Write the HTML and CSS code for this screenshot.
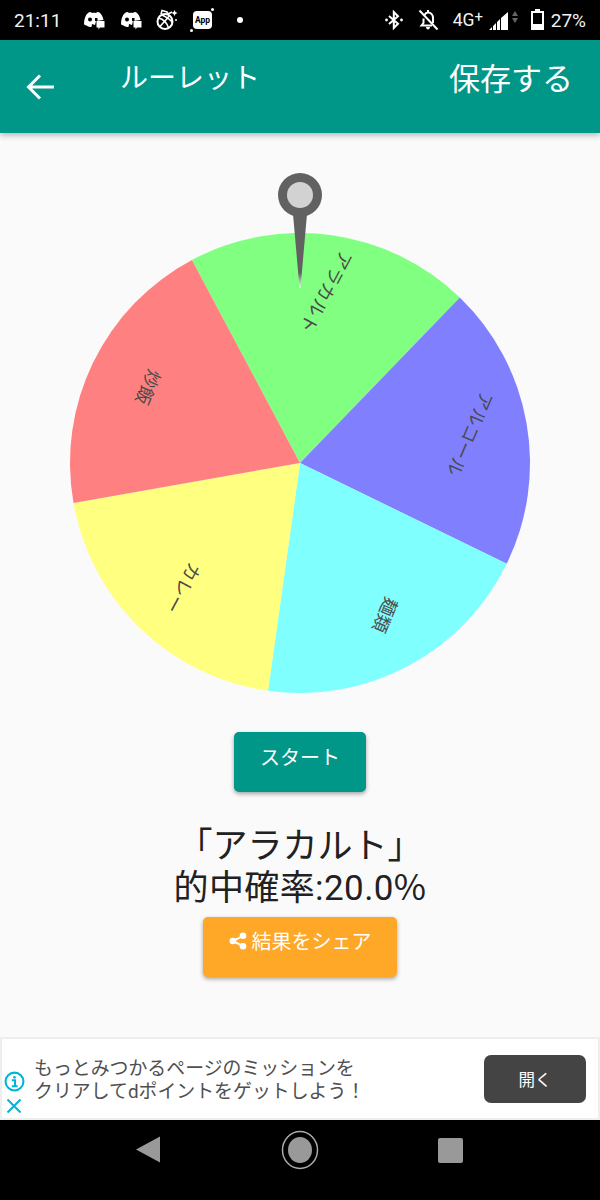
FILE: index.html
```html
<!DOCTYPE html>
<html lang="ja">
<head>
<meta charset="utf-8">
<title>ルーレット</title>
<link rel="stylesheet" href="styles.css">
</head>
<body>
<div class="screen">
  <div class="status">
    <div class="status-left">
      <span class="clock">21:11</span>
      <svg class="notif" width="24" height="20" viewBox="0 0 24 20"><path class="w" d="M1 14 C1 9 2.500 5 5 3 C7 1.500 8 2 9 3 C10 2.500 12 2.500 13 3 C14 2 15.500 1.500 17 3 C19 5 20 7 20.500 10 L13 11 L12 15 L9 14 L8.500 17 C7 17 5 16.500 3.500 15.500 C2 15 1 14.500 1 14Z"/><circle class="k" cx="7" cy="9.500" r="2"/><path class="k" d="M12 8 H14.500 V11 H12Z"/><path class="w" d="M13.500 11 H21.500 V17.500 H17 L15.500 19.500 V17.500 H13.500Z"/></svg>
      <svg class="notif" width="24" height="20" viewBox="0 0 24 20"><path class="w" d="M1 14 C1 9 2.500 5 5 3 C7 1.500 8 2 9 3 C10 2.500 12 2.500 13 3 C14 2 15.500 1.500 17 3 C19 5 20 7 20.500 10 L13 11 L12 15 L9 14 L8.500 17 C7 17 5 16.500 3.500 15.500 C2 15 1 14.500 1 14Z"/><circle class="k" cx="7" cy="9.500" r="2"/><path class="k" d="M12 8 H14.500 V11 H12Z"/><path class="w" d="M13.500 11 H21.500 V17.500 H17 L15.500 19.500 V17.500 H13.500Z"/></svg>
      <svg class="notif ball" width="24" height="22" viewBox="0 0 24 22"><circle class="ws2" cx="10" cy="12.500" r="7.500"/><path class="ws" d="M3.500 9 C8 10 12 14 13.500 19 M7 6 C11 8 16 10 17.500 14 M5 17.500 C8 14 12 10 14.500 6.500"/><path class="ws" d="M6 5 L7 1.500 L12 3 L13 5 M13 5 L17 3"/><path class="w" d="M19.500 1 L20.500 3 L22.500 4 L20.500 5 L19.500 7 L18.500 5 L16.500 4 L18.500 3Z"/><circle class="w" cx="21" cy="11" r="1"/></svg>
      <span class="app-icon"><span class="app-label">App</span><span class="spark spark-a"></span><span class="spark spark-b"></span></span>
      <span class="dot"></span>
    </div>
    <div class="status-right">
      <svg class="bt" width="20" height="20" viewBox="0 0 20 20"><path class="ws2" d="M5 6 L14 13.800 L9.800 18 V2 L14 6.200 L5 14"/><circle class="w" cx="2.500" cy="10" r="1.400"/><circle class="w" cx="17.500" cy="10" r="1.400"/></svg>
      <svg class="bell" width="22" height="22" viewBox="0 0 22 22"><path class="ws2" d="M7.500 6 C8.500 4 10 3.500 11 3.500 C14 3.500 16 6 16 9 V14 M6.500 9.500 V14 L4.500 16.500 H15"/><path class="w" d="M9 18 H13 C13 19.500 12 20.500 11 20.500 C10 20.500 9 19.500 9 18Z"/><path class="ws2" d="M2.500 1.500 L20.500 20.500"/><rect class="w" x="10" y="1" width="2" height="2.500"/></svg>
      <span class="net">4G<span class="plus">+</span></span>
      <svg class="signal" width="30" height="22" viewBox="0 0 30 22"><path class="w" d="M0 21 H3 V18Z M4 21 H7 V14 L4 17Z M8 21 H11 V10 L8 13Z M12 21 H19 V3 L12 9Z"/><path class="g" d="M23 7 L26 2 L29 7Z M23 9 H29 L26 14Z"/></svg>
      <svg class="batt" width="13" height="22" viewBox="0 0 13 22"><path class="w" d="M4 0 H9 V2 H13 V21 H0 V2 H4Z"/><rect class="k" x="2" y="4" width="9" height="11"/></svg>
      <span class="pct">27%</span>
    </div>
  </div>

  <header class="appbar">
    <svg class="back" width="30" height="30" viewBox="0 0 30 30"><path d="M28 15 H3 M14 3.500 L2.500 15 L14 26.500"/></svg>
    <h1 class="title">ルーレット</h1>
    <span class="save">保存する</span>
  </header>

  <main class="content">
    <svg class="wheel" width="600" height="599" viewBox="0 133 600 599">
      <defs>
        <linearGradient id="needle" x1="0" y1="215" x2="0" y2="288" gradientUnits="userSpaceOnUse">
          <stop offset="0" stop-color="#616161"/>
          <stop offset="0.8" stop-color="#616161"/>
          <stop offset="1" stop-color="#ffffff"/>
        </linearGradient>
      </defs>
      <path class="s-green" d="M300 463 L191.900 260 A230 230 0 0 1 459.800 297.500 Z"/>
      <path class="s-blue" d="M300 463 L459.800 297.500 A230 230 0 0 1 506.700 563.800 Z"/>
      <path class="s-cyan" d="M300 463 L506.700 563.800 A230 230 0 0 1 268 690.800 Z"/>
      <path class="s-yellow" d="M300 463 L268 690.800 A230 230 0 0 1 73.500 503 Z"/>
      <path class="s-red" d="M300 463 L73.500 503 A230 230 0 0 1 191.900 260 Z"/>
      <text class="label" x="326" y="292" transform="rotate(118 326 292)">アラカルト</text>
      <text class="label" x="470" y="434" transform="rotate(113 470 434)">アルコール</text>
      <text class="label" x="385" y="615" transform="rotate(113 385 615)">麺類</text>
      <text class="label" x="183" y="588" transform="rotate(118 183 588)">カレー</text>
      <text class="label" x="148" y="387" transform="rotate(113 148 387)">炒飯</text>
      <path fill="url(#needle)" d="M293 214 H307 L300.500 288 H299.500 Z"/>
      <circle class="pin-out" cx="300" cy="195" r="22"/>
      <circle class="pin-in" cx="300" cy="195" r="13"/>
    </svg>
    <button class="btn btn-start">スタート</button>
    <p class="result">「アラカルト」<br><span class="rate">的中確率:20.0<span class="rate-sign">%</span></span></p>
    <button class="btn btn-share">
      <svg width="18" height="18" viewBox="0 0 18 18"><circle class="w" cx="14" cy="3.800" r="3.300"/><circle class="w" cx="3.800" cy="9" r="3.300"/><circle class="w" cx="14" cy="14.200" r="3.300"/><path class="ws2" d="M14 3.800 L3.800 9 L14 14.200"/></svg>
      <span>結果をシェア</span>
    </button>
  </main>

  <aside class="ad">
    <div class="ad-marks">
      <svg width="21" height="21" viewBox="0 0 20 20"><circle class="ad-stroke" cx="10" cy="10" r="8.500"/><circle class="ad-fill" cx="10" cy="6" r="1.300"/><path class="ad-stroke2" d="M7.500 8.800 H10.500 V14.500 M7.500 14.500 H13"/></svg>
      <svg width="16" height="16" viewBox="0 0 16 16"><path class="ad-stroke2" d="M1.500 1.500 L14.500 14.500 M14.500 1.500 L1.500 14.500"/></svg>
    </div>
    <p class="ad-text">もっとみつかるページのミッションを<br>クリアしてdポイントをゲットしよう！</p>
    <span class="ad-open">開く</span>
  </aside>

  <nav class="nav">
    <svg width="26" height="30" viewBox="0 0 26 30"><path class="nav-fill" d="M25 1.500 V27.500 L1 14.500 Z"/></svg>
    <svg class="nav-home" width="38" height="40" viewBox="0 0 38 40"><ellipse class="nav-ring" cx="19" cy="20" rx="17.500" ry="18.500"/><ellipse class="nav-fill" cx="19" cy="20" rx="12" ry="13"/></svg>
    <span class="nav-square"></span>
  </nav>
</div>
</body>
</html>
```
FILE: styles.css
```css
* { box-sizing: border-box; }
html, body { margin: 0; padding: 0; }
body {
  font-family: Roboto, "Noto Sans CJK JP", sans-serif;
  background: #fafafa;
}
.screen {
  width: 600px;
  height: 1200px;
  display: flex;
  flex-direction: column;
  overflow: hidden;
  background: #fafafa;
}
.w { fill: #fff; }
.k { fill: #000; }
.g { fill: #666; }
.ws { fill: none; stroke: #fff; stroke-width: 1.600; }
.ws2 { fill: none; stroke: #fff; stroke-width: 2; }

.status {
  height: 40px;
  background: #000;
  color: #f2f2f2;
  display: flex;
  justify-content: space-between;
  align-items: center;
  padding: 0 14px;
  font-size: 19px;
  flex: none;
}
.status-left, .status-right { display: flex; align-items: center; }
.clock { width: 69px; }
.notif { margin-right: 13px; }
.ball { margin-left: -2px; }
.app-icon {
  width: 19px;
  height: 18px;
  border-radius: 4px;
  background: #fff;
  display: flex;
  align-items: center;
  justify-content: center;
  margin-left: 1px;
  position: relative;
}
.app-label { color: #000; font-size: 8.500px; font-weight: 700; }
.spark {
  position: absolute;
  width: 3px;
  height: 3px;
  border-radius: 50%;
  background: #fff;
}
.spark-a { right: -2px; top: -3px; }
.spark-b { left: -3px; bottom: -3px; }
.dot {
  width: 6px;
  height: 6px;
  border-radius: 50%;
  background: #fff;
  margin-left: 25px;
}
.bt { margin-right: 13px; }
.bell { margin-right: 14px; }
.net { font-size: 17.500px; width: 36px; white-space: nowrap; }
.plus { font-size: 15px; position: relative; top: -4px; }
.signal { margin-right: 12px; }
.batt { margin-right: 7px; }
.pct { font-size: 19px; }

.appbar {
  height: 93px;
  background: #009688;
  color: #fff;
  position: relative;
  z-index: 1;
  box-shadow: 0 2px 6px rgba(0,0,0,.3);
  display: flex;
  align-items: flex-start;
  padding: 0 27px 0 26px;
  flex: none;
}
.back { margin-top: 32px; fill: none; stroke: #fff; stroke-width: 3; }
.title {
  font-size: 28px;
  font-weight: 400;
  margin: 19px 0 0 64px;
  line-height: 40px;
  flex: 1;
}
.save { font-size: 31px; line-height: 44px; margin-top: 18px; }

.content {
  flex: 1;
  display: flex;
  flex-direction: column;
  align-items: center;
}
.wheel { display: block; flex: none; }
.s-green { fill: #80ff80; }
.s-blue { fill: #8080ff; }
.s-cyan { fill: #80ffff; }
.s-yellow { fill: #ffff80; }
.s-red { fill: #ff8080; }
.label {
  font-size: 18px;
  fill: #4a4a4a;
  text-anchor: middle;
  dominant-baseline: central;
}
.pin-out { fill: #616161; }
.pin-in { fill: #d2d2d2; }

.btn {
  height: 60px;
  border: 0;
  border-radius: 5px;
  color: #fff;
  font: inherit;
  font-size: 20px;
  display: flex;
  align-items: center;
  justify-content: center;
  padding-bottom: 12px;
  box-shadow: 0 2px 4px rgba(0,0,0,.35);
}
.btn-start { width: 132px; background: #009688; }
.btn-share { width: 194px; background: #ffa726; gap: 5px; padding-bottom: 14px; }
.result {
  margin: 34px 0 0;
  font-size: 35px;
  line-height: 42px;
  color: #212121;
  text-align: center;
  height: 91px;
  white-space: nowrap;
}
.rate { letter-spacing: .4px; }
.rate-sign { font-family: "Noto Sans CJK JP", sans-serif; line-height: 0; }

.ad {
  height: 83px;
  background: #fff;
  border: 2px solid #eee;
  display: flex;
  align-items: center;
  flex: none;
  position: relative;
}
.ad-marks {
  width: 28px;
  display: flex;
  flex-direction: column;
  align-items: center;
  gap: 6px;
  padding-top: 27px;
  margin-left: -2px;
  flex: none;
}
.ad-stroke { fill: none; stroke: #00b4d8; stroke-width: 2; }
.ad-stroke2 { fill: none; stroke: #00b4d8; stroke-width: 2; }
.ad-fill { fill: #00b4d8; }
.ad-text {
  margin: 3px 0 0 6px;
  font-size: 18.900px;
  line-height: 23px;
  color: #505050;
  flex: 1;
}
.ad-open {
  width: 102px;
  height: 48px;
  border-radius: 7px;
  background: #444;
  color: #fff;
  font-size: 16.500px;
  display: flex;
  align-items: center;
  justify-content: center;
  margin-right: 12px;
}

.nav {
  height: 80px;
  background: #000;
  display: flex;
  align-items: center;
  flex: none;
  padding: 0 137px 20px 135px;
  justify-content: space-between;
}
.nav-fill { fill: #999; }
.nav-ring { fill: none; stroke: #aaa; stroke-width: 1.500; }
.nav-square {
  width: 25px;
  height: 25px;
  border-radius: 2px;
  background: #999;
}
```
